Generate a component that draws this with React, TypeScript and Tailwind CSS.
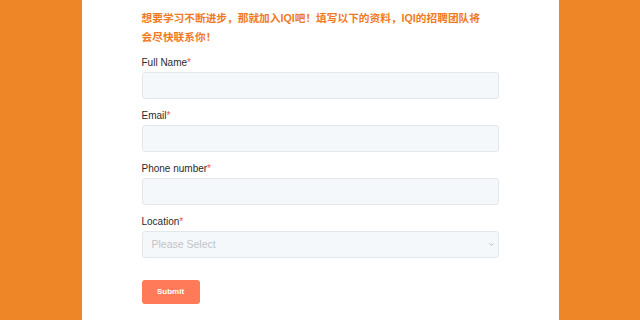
import { ChevronDown } from "lucide-react";

const fields = [
  { label: "Full Name", type: "text" },
  { label: "Email", type: "email" },
  { label: "Phone number", type: "tel" },
];

function Label({ text }: { text: string }) {
  return (
    <label className="block text-[10px] leading-[12px] text-[#2b2b2b] mb-[3px]">
      {text}
      <span className="text-[#f2545b]">*</span>
    </label>
  );
}

export default function App() {
  return (
    <div className="w-[640px] h-[320px] bg-[#ee8526] flex justify-center overflow-hidden font-['Liberation_Sans','Noto_Sans_CJK_SC',sans-serif]">
      <div className="w-[477px] h-full bg-white px-[60px] pt-[9px]">
        <h2 className="text-[10.7px] leading-[19px] font-bold text-[#f07a22] mb-[10px]">
          想要学习不断进步，那就加入IQI吧！填写以下的资料，IQI的招聘团队将
          <br />
          会尽快联系你！
        </h2>
        <form onSubmit={(e) => e.preventDefault()}>
          {fields.map((f) => (
            <div key={f.label} className="mb-[11px]">
              <Label text={f.label} />
              <input
                type={f.type}
                className="block w-full h-[27px] bg-[#f5f8fa] border border-[#e1e7ed] rounded-[3px] px-2 text-[10px] outline-none"
              />
            </div>
          ))}
          <div className="mb-[19px]">
            <Label text="Location" />
            <div className="relative">
              <select
                defaultValue=""
                className="block w-full h-[27px] appearance-none bg-[#f5f8fa] border border-[#e1e7ed] rounded-[3px] pl-[9px] text-[10.5px] text-[#bfc4ca] outline-none"
              >
                <option value="" disabled>
                  Please Select
                </option>
                <option>Kuala Lumpur</option>
                <option>Penang</option>
              </select>
              <ChevronDown className="absolute right-[4px] top-[10px] w-[7px] h-[7px] text-[#a7b0b9]" strokeWidth={3} />
            </div>
          </div>
          <button
            type="submit"
            className="w-[58px] h-[24px] bg-[#ff7a59] rounded-[3px] text-white text-[8px] font-bold"
          >
            Submit
          </button>
        </form>
      </div>
    </div>
  );
}
